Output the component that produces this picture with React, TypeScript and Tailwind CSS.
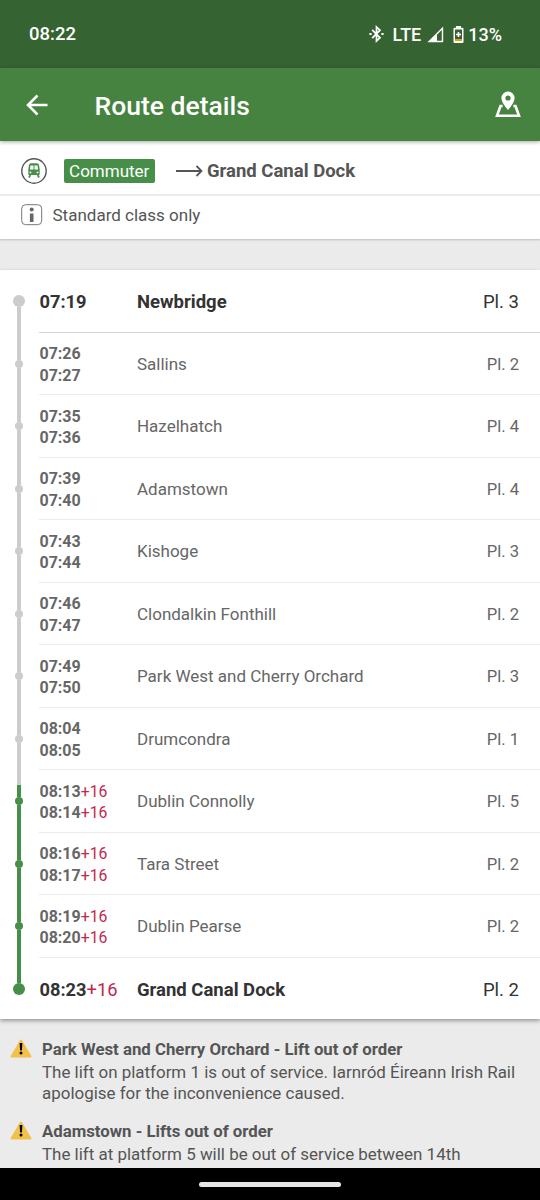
import type { ReactNode } from 'react';

interface Stop {
  name: string;
  times: string[];
  platform: number;
  delay?: string;
  passed?: boolean;
}

const stops: Stop[] = [
  { name: 'Newbridge', times: ['07:19'], platform: 3, passed: true },
  { name: 'Sallins', times: ['07:26', '07:27'], platform: 2, passed: true },
  { name: 'Hazelhatch', times: ['07:35', '07:36'], platform: 4, passed: true },
  { name: 'Adamstown', times: ['07:39', '07:40'], platform: 4, passed: true },
  { name: 'Kishoge', times: ['07:43', '07:44'], platform: 3, passed: true },
  { name: 'Clondalkin Fonthill', times: ['07:46', '07:47'], platform: 2, passed: true },
  { name: 'Park West and Cherry Orchard', times: ['07:49', '07:50'], platform: 3, passed: true },
  { name: 'Drumcondra', times: ['08:04', '08:05'], platform: 1, passed: true },
  { name: 'Dublin Connolly', times: ['08:13', '08:14'], platform: 5, delay: '+16' },
  { name: 'Tara Street', times: ['08:16', '08:17'], platform: 2, delay: '+16' },
  { name: 'Dublin Pearse', times: ['08:19', '08:20'], platform: 2, delay: '+16' },
  { name: 'Grand Canal Dock', times: ['08:23'], platform: 2, delay: '+16' },
];

function StatusBar() {
  return (
    <div className="flex h-[68px] shrink-0 items-center bg-[#366332] pl-[29px] pr-[38px] text-[18px] font-medium text-white">
      <span className="grow pt-[2px] text-[18.5px]">08:22</span>
      <svg width="15" height="18" viewBox="0 0 15 18" fill="none" stroke="currentColor" strokeWidth="1.7" className="mr-[9px]">
        <path d="M3.2 4.8 11 12.8 7.5 16V2L11 5.2 3.2 13.2" />
        <path d="M.4 9h2.2M12.4 9h2.2" strokeWidth="2" />
      </svg>
      <span className="mr-[6px]">LTE</span>
      <svg width="17" height="17" viewBox="0 0 17 17" className="mr-[9px]">
        <path d="M15.5 2.2V15.5H2.2Z" fill="none" stroke="currentColor" strokeWidth="1.4" />
        <path d="M10 7.5V16H1.2Z" fill="currentColor" />
      </svg>
      <svg width="11" height="17" viewBox="0 0 11 17" className="mr-[4px]">
        <path d="M3 0h5v2H3zM1.5 1.8h8q1 0 1 1V16q0 1-1 1h-8q-1 0-1-1V2.8q0-1 1-1z" fill="currentColor" />
        <path d="M2 3.5h7V13H2z" fill="#366332" />
        <path d="M2 13h7v2H2z" fill="#d9a521" />
        <path d="M5.5 6v5M3 8.5h5" stroke="currentColor" strokeWidth="1.6" />
      </svg>
      <span>13%</span>
    </div>
  );
}

function AppBar() {
  return (
    <header className="relative z-10 flex h-[73px] shrink-0 items-center bg-[#478340] pl-[26px] pr-[18px] text-white shadow-[0_1px_4px_rgba(0,0,0,0.35)]">
      <svg width="22" height="22" viewBox="0 0 22 22" fill="none" stroke="currentColor" strokeWidth="2.5">
        <path d="M21.5 11H2.5M11.5 1.5 2 11l9.5 9.5" />
      </svg>
      <h1 className="ml-[46.5px] grow pt-[3px] text-[26.5px] font-medium leading-none">Route details</h1>
      <svg width="26" height="27" viewBox="0 0 26 27" className="mr-[1px]">
        <path
          d="M13 .5a6.6 6.6 0 0 0-6.6 6.6C6.4 12 13 19 13 19s6.600-7 6.600-11.900A6.600 6.600 0 0 0 13 .5zm0 9.100a2.600 2.600 0 1 1 0-5.200 2.600 2.600 0 0 1 0 5.200z"
          fill="currentColor"
          fillRule="evenodd"
        />
        <path d="M7.600 15H5.500L2 24.700h22L20.500 15h-2.100" fill="none" stroke="currentColor" strokeWidth="2.600" />
      </svg>
    </header>
  );
}

function TrainIcon() {
  return (
    <svg width="26" height="26" viewBox="0 0 26 26" className="shrink-0">
      <circle cx="13" cy="13" r="12.2" fill="none" stroke="#555" strokeWidth="1.4" />
      <path
        d="M10 5.2h6q1.700 0 2 1.600l.7 4.600v4.600q0 1-1 1H8.300q-1 0-1-1v-4.600L8 6.800q.3-1.600 2-1.600zM9.500 7.400l-.6 4.200h3.600V7.400zm4 0v4.200h3.600l-.6-4.200zM9.500 13.500a.9.9 0 1 0 0 1.800.9.9 0 0 0 0-1.800zm7 0a.9.9 0 1 0 0 1.800.9.9 0 0 0 0-1.800z"
        fill="#4a8f49"
        fillRule="evenodd"
      />
      <path d="M9.300 17 8 19.500M16.700 17l1.300 2.500" stroke="#4a8f49" strokeWidth="1.800" />
    </svg>
  );
}

function InfoIcon() {
  return (
    <svg width="22" height="22" viewBox="0 0 22 22" fill="#666" className="shrink-0">
      <rect x=".7" y=".7" width="20" height="20" rx="4" fill="none" stroke="#777" strokeWidth="1" />
      <circle cx="10.7" cy="5.6" r="2" />
      <path d="M8.900 9.500h3.600V18H8.900z" />
    </svg>
  );
}

function TripSummary() {
  return (
    <section className="h-[98px] shrink-0 bg-white text-[#555] shadow-[0_1px_2px_rgba(0,0,0,0.2)]">
      <div className="flex h-[55px] items-center border-b-2 border-[#ebebeb] pl-[21px] pt-[6px]">
        <TrainIcon />
        <span className="ml-[16.5px] flex h-[24px] w-[91.5px] items-center justify-center rounded-[2px] bg-[#478f49] pt-[2px] text-[17px] text-white">
          Commuter
        </span>
        <svg width="27" height="12" viewBox="0 0 27 12" fill="none" stroke="currentColor" strokeWidth="1.8" className="ml-[21px] mr-[4px]">
          <path d="M0 6h25.5M20.5 1l5 5-5 5" />
        </svg>
        <span className="pt-[3px] text-[18.5px] font-bold">Grand Canal Dock</span>
      </div>
      <div className="flex items-center pl-[21px] pt-[7px]">
        <InfoIcon />
        <span className="ml-[9.5px] text-[17px] leading-[24px]">Standard class only</span>
      </div>
    </section>
  );
}

function Track({ index, passed }: { index: number; passed?: boolean }) {
  const first = index === 0;
  const last = index === stops.length - 1;
  // the train currently sits just before the first stop that is not passed
  const current = !passed && stops[index - 1]?.passed;
  const color = passed ? 'bg-[#cccccc]' : 'bg-[#478f49]';

  return (
    <div className="mr-[0.7px] flex w-[38.8px] shrink-0 flex-col items-center">
      <div className={`w-[4px] ${current ? 'h-[15px] bg-[#cccccc]' : first ? 'h-[25px]' : last ? `h-[25px] ${color}` : `h-[15px] ${color}`}`} />
      {!first && !last && <div className={`h-[12px] w-[4px] ${color}`} />}
      <div className={`shrink-0 rounded-full ${color} ${first || last ? 'size-[12px]' : 'size-[8px]'}`} />
      {!last && <div className={`w-[4px] grow ${color}`} />}
    </div>
  );
}

function StopRow({ stop, index }: { stop: Stop; index: number }) {
  const terminal = index === 0 || index === stops.length - 1;
  const border = index === stops.length - 1 ? '' : index === 0 ? 'border-b border-[#d6d6d6]' : 'border-b border-[#ebebeb]';

  return (
    <li className="flex h-[62.5px]">
      <Track index={index} passed={stop.passed} />
      <div className={`flex grow items-center pr-[21px] ${border} ${terminal ? 'text-[18.5px] text-[#333]' : 'text-[17px] text-[#666]'}`}>
        <div className={`w-[97.5px] shrink-0 pt-[3px] ${terminal ? 'text-[18.3px] leading-[22px]' : 'text-[16px] leading-[21.5px]'}`}>
          {stop.times.map((time) => (
            <div key={time} className="whitespace-nowrap">
              <span className="font-bold">{time}</span>
              {stop.delay && <span className={terminal ? 'text-[#c0284f]' : 'text-[15.8px] text-[#c0284f]'}>{stop.delay}</span>}
            </div>
          ))}
        </div>
        <span className={`grow ${terminal ? 'pt-[4.5px] font-bold' : 'pt-[2.5px]'}`}>{stop.name}</span>
        <span className={terminal ? 'pt-[4.5px]' : 'pt-[3.5px] text-[16.6px]'}>Pl. {stop.platform}</span>
      </div>
    </li>
  );
}

function Notice({ title, children }: { title: string; children: ReactNode }) {
  return (
    <article className="flex pl-[10px] text-[16.95px] text-[#555]">
      <svg width="22" height="19" viewBox="0 0 22 19" className="mr-[10px] shrink-0">
        <path d="M11 1.5 20.5 17.5H1.5Z" fill="#f2c14b" stroke="#f2c14b" strokeWidth="2" strokeLinejoin="round" />
        <path d="M9.6 4h2.8l-.5 7.5h-1.8z" />
        <circle cx="11" cy="14" r="1.5" />
      </svg>
      <div>
        <h2 className="mb-[2px] text-[16.8px] font-bold leading-[21px]">{title}</h2>
        <p className="whitespace-nowrap leading-[20.5px]">{children}</p>
      </div>
    </article>
  );
}

export default function App() {
  return (
    <div className="flex h-[1200px] w-[540px] flex-col overflow-hidden bg-[#ebebeb] font-['Roboto',sans-serif]">
      <StatusBar />
      <AppBar />
      <TripSummary />
      <ul className="relative mt-[31px] h-[749px] shrink-0 bg-white shadow-[0_2px_4px_rgba(0,0,0,0.35)]">
        {stops.map((stop, index) => (
          <StopRow key={stop.name} stop={stop} index={index} />
        ))}
      </ul>
      <main className="flex h-[149px] shrink-0 flex-col gap-[18px] overflow-hidden pt-[20px]">
        <Notice title="Park West and Cherry Orchard - Lift out of order">
          The lift on platform 1 is out of service. Iarnród Éireann Irish Rail
          <br />
          apologise for the inconvenience caused.
        </Notice>
        <Notice title="Adamstown - Lifts out of order">
          The lift at platform 5 will be out of service between 14th
          <br />
          November and 15th December. The lift needs to be for main
        </Notice>
      </main>
      <footer className="flex h-[32px] shrink-0 items-center justify-center bg-black">
        <div className="h-[5px] w-[142px] rounded-full bg-[#e6e6e6]" />
      </footer>
    </div>
  );
}
